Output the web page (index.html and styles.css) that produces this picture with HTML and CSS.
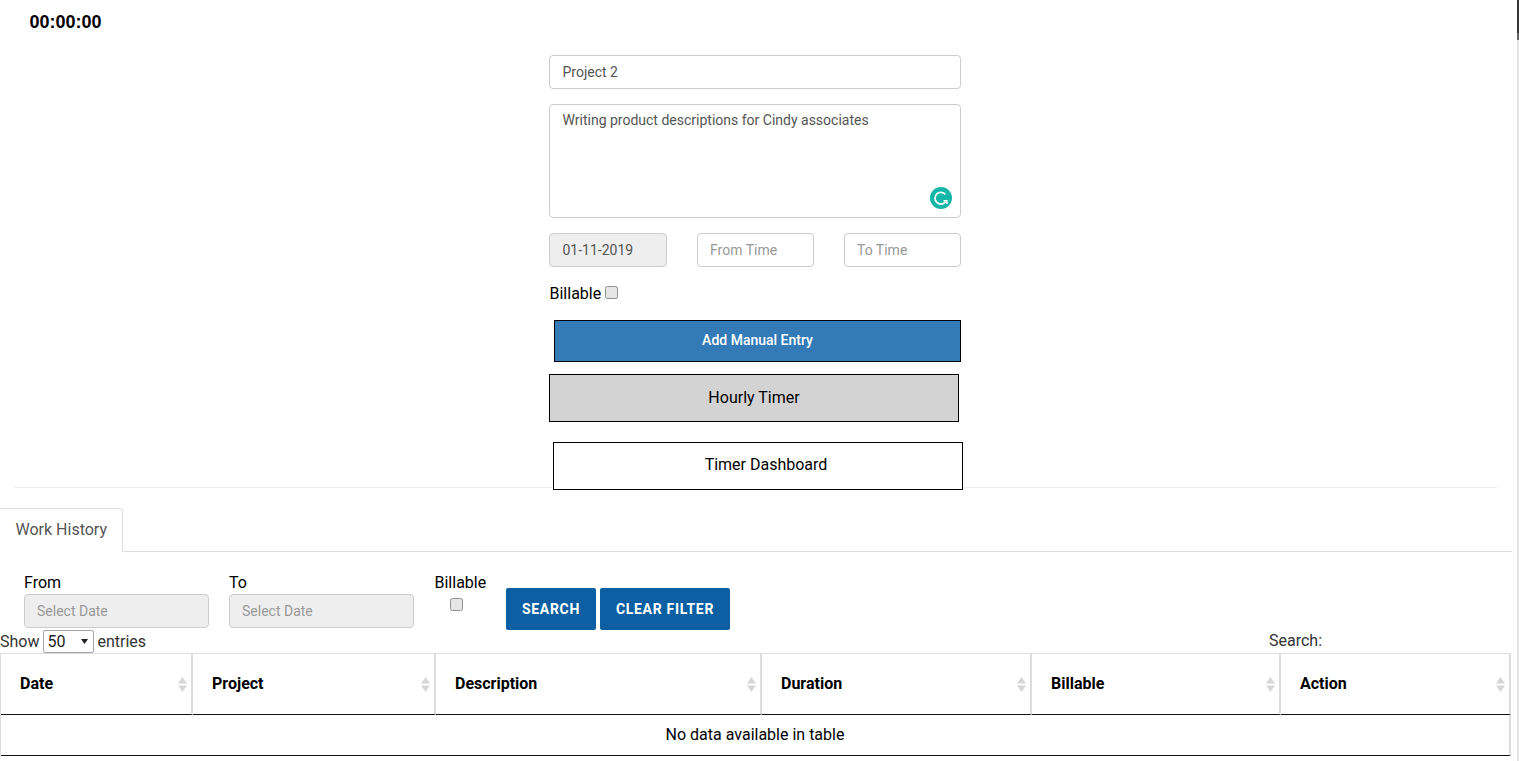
FILE: index.html
```html
<!DOCTYPE html>
<html lang="en">
<head>
<meta charset="utf-8">
<title>Work History</title>
<link rel="stylesheet" href="styles.css">
</head>
<body>
<div class="scrollbar"><div class="scrollbar-thumb"></div></div>
<header class="clock">00:00:00</header>
<main class="entry-form">
  <input class="field" type="text" value="Project 2">
  <div class="note-wrap">
    <textarea class="field note">Writing product descriptions for Cindy associates</textarea>
    <svg class="grammarly" width="22" height="22" viewBox="0 0 22 22" aria-hidden="true">
      <circle cx="11" cy="11" r="11" fill="#15b5a7"/>
      <path d="M15.400 7.400A5.900 5.900 0 1 0 15.400 15" fill="none" stroke="#fff" stroke-width="1.700"/>
      <path d="M13.600 13.800H16.800V17" fill="none" stroke="#fff" stroke-width="1.700"/>
    </svg>
  </div>
  <div class="time-row">
    <input class="field date" type="text" value="01-11-2019" readonly>
    <input class="field time" type="text" placeholder="From Time">
    <input class="field time" type="text" placeholder="To Time">
  </div>
  <label class="billable">Billable <input class="check" type="checkbox"></label>
  <button class="btn-add" type="button">Add Manual Entry</button>
  <button class="btn-hourly" type="button">Hourly Timer</button>
  <button class="btn-dash" type="button">Timer Dashboard</button>
</main>
<hr class="divider">
<nav class="tabs"><a class="tab">Work History</a></nav>
<section class="filters">
  <div class="filter filter-date">
    <label>From</label>
    <input class="field filter-input" type="text" placeholder="Select Date" readonly>
  </div>
  <div class="filter filter-date">
    <label>To</label>
    <input class="field filter-input" type="text" placeholder="Select Date" readonly>
  </div>
  <div class="filter filter-bill">
    <label>Billable</label>
    <input class="check" type="checkbox">
  </div>
  <div class="filter-actions">
    <button class="btn-filter btn-search" type="button">SEARCH</button>
    <button class="btn-filter btn-clear" type="button">CLEAR FILTER</button>
  </div>
</section>
<div class="table-tools">
  <div class="length"><span>Show</span>
    <span class="select"><span>50</span><svg width="7" height="5" viewBox="0 0 7 5" aria-hidden="true"><path d="M0 0H7L3.500 5Z" fill="#222"/></svg></span>
    <span>entries</span></div>
  <div class="search">Search:</div>
</div>
<table class="history">
  <colgroup>
    <col class="c1"><col class="c2"><col class="c3"><col class="c4"><col class="c5"><col class="c6">
  </colgroup>
  <thead>
    <tr>
      <th><span>Date</span><svg class="sort" width="9" height="15" viewBox="0 0 9 15" aria-hidden="true"><path d="M4.5 0L9 6.500H0Z" fill="#d6d6d6"/><path d="M0 8.500H9L4.500 15Z" fill="#d6d6d6"/></svg></th>
      <th><span>Project</span><svg class="sort" width="9" height="15" viewBox="0 0 9 15" aria-hidden="true"><path d="M4.5 0L9 6.500H0Z" fill="#d6d6d6"/><path d="M0 8.500H9L4.500 15Z" fill="#d6d6d6"/></svg></th>
      <th><span>Description</span><svg class="sort" width="9" height="15" viewBox="0 0 9 15" aria-hidden="true"><path d="M4.5 0L9 6.500H0Z" fill="#d6d6d6"/><path d="M0 8.500H9L4.500 15Z" fill="#d6d6d6"/></svg></th>
      <th><span>Duration</span><svg class="sort" width="9" height="15" viewBox="0 0 9 15" aria-hidden="true"><path d="M4.5 0L9 6.500H0Z" fill="#d6d6d6"/><path d="M0 8.500H9L4.500 15Z" fill="#d6d6d6"/></svg></th>
      <th><span>Billable</span><svg class="sort" width="9" height="15" viewBox="0 0 9 15" aria-hidden="true"><path d="M4.5 0L9 6.500H0Z" fill="#d6d6d6"/><path d="M0 8.500H9L4.500 15Z" fill="#d6d6d6"/></svg></th>
      <th><span>Action</span><svg class="sort" width="9" height="15" viewBox="0 0 9 15" aria-hidden="true"><path d="M4.5 0L9 6.500H0Z" fill="#d6d6d6"/><path d="M0 8.500H9L4.500 15Z" fill="#d6d6d6"/></svg></th>
    </tr>
  </thead>
  <tbody>
    <tr><td colspan="6">No data available in table</td></tr>
  </tbody>
</table>
</body>
</html>
```
FILE: styles.css
```css
* { box-sizing: border-box; }
html, body { height: 761px; overflow: hidden; }
body {
  margin: 0;
  background: #fff;
  color: #000;
  font-family: Roboto, "Liberation Sans", sans-serif;
  font-size: 16px;
  line-height: 20px;
}
.scrollbar {
  position: absolute;
  top: 0;
  right: 0;
  width: 2px;
  height: 761px;
  background: #e6e6e6;
}
.scrollbar-thumb { height: 40px; background: linear-gradient(#333 33px, #666 33px); }
.clock {
  height: 55px;
  padding: 12px 0 0 29.5px;
  font-family: "Liberation Sans", Arial, sans-serif;
  font-size: 18px;
  font-weight: 700;
}
.entry-form {
  width: 412px;
  margin-left: 549px;
  height: 435px;
  display: flex;
  flex-direction: column;
  align-items: flex-start;
}
.field {
  display: block;
  width: 100%;
  height: 34px;
  padding: 6px 12.5px;
  border: 1px solid #ccc;
  border-radius: 4px;
  background: #fff;
  color: #555;
  font-family: Roboto, sans-serif;
  font-size: 14px;
  line-height: 20px;
  outline: none;
}
.field::placeholder { color: #999; opacity: 1; }
.note-wrap { position: relative; width: 100%; height: 114px; margin-top: 15px; }
.note { height: 114px; padding-top: 5px; resize: none; overflow: hidden; }
.grammarly { position: absolute; right: 9px; bottom: 9px; }
.time-row { width: 100%; margin-top: 15px; display: flex; justify-content: space-between; }
.date { width: 118px; background: #eee; }
.time { width: 117px; padding-left: 12px; }
.billable { margin-top: 16px; height: 21px; padding-left: 0.5px; display: flex; align-items: center; gap: 3.5px; }
.check {
  appearance: none;
  display: block;
  width: 13px;
  height: 13px;
  margin: 0;
  border: 1px solid #8f8f8f;
  border-radius: 2.5px;
  background: #e6e6e6;
}
.billable .check { margin: -2px 0 0; }
.entry-form button {
  display: block;
  border: 1px solid #000;
  font-family: Roboto, sans-serif;
}
.entry-form .btn-add {
  width: 407px;
  height: 42px;
  margin: 16px 0 0 5px;
  padding: 0 0 2px;
  background: #337ab7;
  color: #fff;
  font-size: 14px;
  font-weight: 500;
}
.entry-form .btn-hourly {
  width: 410px;
  height: 48px;
  margin-top: 12px;
  padding: 0 0 2px;
  background: #d3d3d3;
  color: #000;
  font-size: 16px;
}
.entry-form .btn-dash {
  position: relative;
  z-index: 1;
  width: 410px;
  height: 48px;
  margin: 20px 0 0 4px;
  padding: 0 0 4px 16px;
  background: #fff;
  color: #000;
  font-size: 16px;
}
.divider {
  height: 1px;
  margin: -3px 22px 0 14px;
  border: 0;
  background: #eee;
}
.tabs { margin-top: 20px; width: 1512px; height: 44px; border-bottom: 1px solid #ddd; }
.tab {
  display: block;
  width: 123px;
  height: 44px;
  padding: 11px 0 11px 15.5px;
  border: 1px solid #ddd;
  border-left: 0;
  border-bottom-color: #fff;
  border-radius: 0 4px 0 0;
  color: #555;
  white-space: nowrap;
}
.filters { height: 78px; display: flex; padding: 20px 0 0 24px; }
.filter label { display: block; height: 22px; line-height: 21px; }
.filter-date { width: 185px; margin-right: 20px; }
.filter-input { background: #eee; padding-left: 12px; }
.filter-bill { width: 71px; margin-left: 0.5px; }
.filter-bill .check { margin: 4px 0 0 15.5px; }
.filter-actions { display: flex; gap: 4px; height: 42px; margin: 16px 0 0 0.5px; }
.btn-filter {
  height: 42px;
  padding: 0;
  border: 0;
  border-radius: 2px;
  background: #0b5fa2;
  color: #fff;
  font-family: Roboto, sans-serif;
  font-size: 14px;
  font-weight: 700;
  letter-spacing: 0.7px;
}
.btn-search { width: 90px; }
.btn-clear { width: 130px; }
.table-tools {
  width: 1510px;
  height: 23px;
  display: flex;
  justify-content: space-between;
  color: #333;
}
.length { display: flex; align-items: flex-start; gap: 4px; padding-top: 1px; line-height: 22px; }
.length .select { margin: -1px -1px 0 0; }
.select {
  display: flex;
  align-items: center;
  justify-content: space-between;
  width: 51px;
  height: 23px;
  padding: 0 5px 0 3px;
  border: 1px solid #a79fb0;
  border-radius: 2px;
  color: #222;
}
.search { width: 241px; line-height: 22px; }
.history {
  width: 1511px;
  table-layout: fixed;
  border-collapse: separate;
  border-spacing: 0;
  border-top: 1px solid #ddd;
  border-left: 1px solid #ddd;
}
.c1 { width: 192px; }
.c2 { width: 243px; }
.c3 { width: 326px; }
.c4 { width: 270px; }
.c5 { width: 249px; }
.history th {
  position: relative;
  height: 61px;
  padding: 0 19px;
  border-right: 2px solid #ddd;
  border-bottom: 1px solid #111;
  text-align: left;
  font-weight: 700;
  font-size: 16px;
}
.sort { position: absolute; right: 4.5px; top: 23px; }
.history td {
  height: 41px;
  text-align: center;
  border-right: 2px solid #ddd;
  border-bottom: 1px solid #111;
}
```
